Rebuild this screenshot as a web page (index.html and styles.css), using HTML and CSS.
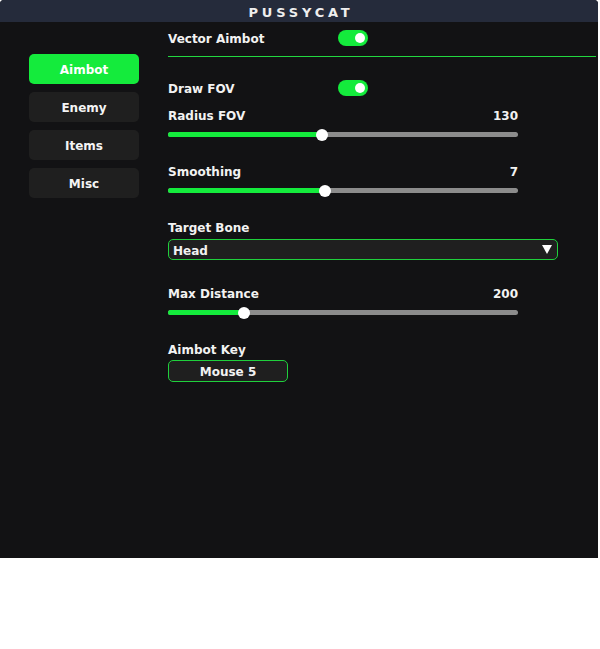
FILE: index.html
```html
<!DOCTYPE html>
<html>
<head>
<meta charset="utf-8">
<link rel="stylesheet" href="styles.css">
</head>
<body>
<div class="window">
  <div class="titlebar">PUSSYCAT</div>
  <div class="main">
    <nav class="sidebar">
      <div class="tab active">Aimbot</div>
      <div class="tab">Enemy</div>
      <div class="tab">Items</div>
      <div class="tab">Misc</div>
    </nav>
    <section class="content">
      <div class="toggle-row first">
        <span class="label toggle-label">Vector Aimbot</span>
        <span class="toggle"><span class="toggle-knob"></span></span>
      </div>
      <div class="divider"></div>
      <div class="toggle-row draw">
        <span class="label toggle-label">Draw FOV</span>
        <span class="toggle"><span class="toggle-knob"></span></span>
      </div>

      <div class="slider-head s-radius"><span class="label">Radius FOV</span><span class="label">130</span></div>
      <div class="track"><div class="fill" style="width:154px"></div><div class="knob" style="left:148px"></div></div>

      <div class="slider-head s-gap"><span class="label">Smoothing</span><span class="label">7</span></div>
      <div class="track"><div class="fill" style="width:157px"></div><div class="knob" style="left:151px"></div></div>

      <div class="label field-label">Target Bone</div>
      <div class="select">
        <span class="label">Head</span>
        <svg class="caret" width="10" height="9" viewBox="0 0 10 9"><polygon points="0,0 10,0 5,9" fill="#ffffff"/></svg>
      </div>

      <div class="slider-head s-gap2"><span class="label">Max Distance</span><span class="label">200</span></div>
      <div class="track"><div class="fill" style="width:76px"></div><div class="knob" style="left:70px"></div></div>

      <div class="label field-label key-label">Aimbot Key</div>
      <div class="keybtn">Mouse 5</div>
    </section>
  </div>
</div>
</body>
</html>
```
FILE: styles.css
```css
html, body {
  margin: 0;
  padding: 0;
  background: #ffffff;
}
body {
  font-family: "DejaVu Sans", Verdana, sans-serif;
  font-weight: bold;
  font-size: 12px;
  color: #f2f2f2;
}
.window {
  width: 598px;
  height: 558px;
  background: #121214;
  border-radius: 4px 4px 0 0;
  overflow: hidden;
  display: flex;
  flex-direction: column;
}
.titlebar {
  height: 22px;
  line-height: 25px;
  overflow: hidden;
  background: #252b3b;
  text-align: center;
  font-size: 13px;
  letter-spacing: 3.8px;
  padding-left: 4px;
  color: #eeeeee;
}
.main {
  display: flex;
  flex: 1;
}
.sidebar {
  width: 110px;
  margin-left: 29px;
  margin-top: 32px;
  display: flex;
  flex-direction: column;
  gap: 8px;
}
.tab {
  height: 30px;
  line-height: 33px;
  overflow: hidden;
  border-radius: 5px;
  background: #1f1f1f;
  text-align: center;
  font-size: 12px;
  color: #f4f4f4;
}
.tab.active {
  background: #14eb3c;
  color: #ffffff;
}
.content {
  margin-left: 29px;
  width: 428px;
  display: flex;
  flex-direction: column;
}
.label {
  display: block;
  height: 16px;
  line-height: 19px;
  font-size: 12px;
}
.toggle-row {
  display: flex;
  align-items: flex-start;
  height: 16px;
}
.toggle-row.first { margin-top: 8px; }
.toggle-row.draw { margin-top: 23px; }
.toggle-label { width: 170px; }
.toggle {
  width: 30px;
  height: 16px;
  border-radius: 8px;
  background: #14eb3c;
  display: flex;
  align-items: center;
  justify-content: flex-end;
  padding-right: 3px;
  box-sizing: border-box;
}
.toggle-knob {
  width: 10px;
  height: 10px;
  border-radius: 50%;
  background: #ffffff;
}
.divider {
  margin-top: 10px;
  height: 1px;
  background: #22d840;
}
.slider-head {
  width: 350px;
  display: flex;
  justify-content: space-between;
}
.s-radius { margin-top: 11px; }
.s-gap { margin-top: 26px; }
.s-gap2 { margin-top: 25px; }
.track {
  position: relative;
  width: 350px;
  height: 5px;
  margin-top: 9px;
  border-radius: 3px;
  background: #8c8c8c;
}
.fill {
  height: 5px;
  border-radius: 3px 0 0 3px;
  background: #14eb3c;
}
.knob {
  position: absolute;
  top: -3.5px;
  width: 12px;
  height: 12px;
  border-radius: 50%;
  background: #ffffff;
}
.field-label { margin-top: 26px; }
.key-label { margin-top: 26px; }
.select {
  margin-top: 4px;
  width: 390px;
  height: 21px;
  box-sizing: border-box;
  border: 1px solid #1fd03c;
  border-radius: 5px;
  background: #1f1f1f;
  display: flex;
  align-items: center;
  justify-content: space-between;
  padding: 0 5px 0 4px;
}
.select .label { line-height: 18px; }
.caret { display: block; margin-top: -1px; }
.keybtn {
  margin-top: 3px;
  width: 120px;
  height: 22px;
  box-sizing: border-box;
  border: 1px solid #1fd03c;
  border-radius: 5px;
  background: #1f1f1f;
  text-align: center;
  line-height: 22px;
  overflow: hidden;
  font-size: 12px;
}
```
